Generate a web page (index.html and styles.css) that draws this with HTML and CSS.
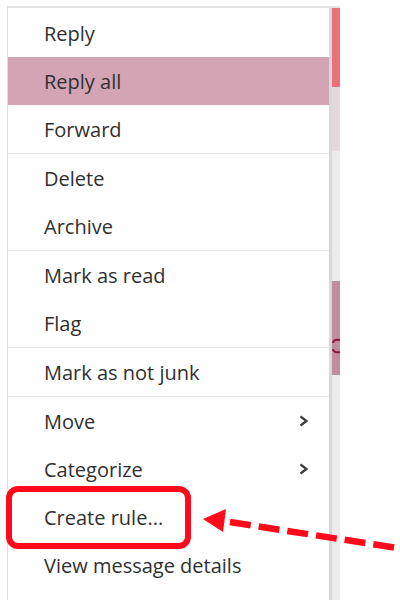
FILE: index.html
```html
<!DOCTYPE html>
<html>
<head>
<meta charset="utf-8">
<link rel="stylesheet" href="styles.css">
</head>
<body>
<div class="frame">
  <ul class="menu">
    <li class="item">Reply</li>
    <li class="item active">Reply all</li>
    <li class="item">Forward</li>
    <li class="sep"></li>
    <li class="item">Delete</li>
    <li class="item">Archive</li>
    <li class="sep"></li>
    <li class="item">Mark as read</li>
    <li class="item">Flag</li>
    <li class="sep"></li>
    <li class="item">Mark as not junk</li>
    <li class="sep"></li>
    <li class="item sub">Move<svg class="chev" width="10" height="12" viewBox="0 0 10 12"><polyline points="1.5,1.5 7.5,6 1.5,10.5" fill="none" stroke="#3c3c3c" stroke-width="2.2"/></svg></li>
    <li class="item sub">Categorize<svg class="chev" width="10" height="12" viewBox="0 0 10 12"><polyline points="1.5,1.5 7.5,6 1.5,10.5" fill="none" stroke="#3c3c3c" stroke-width="2.2"/></svg></li>
    <li class="item marked">Create rule...<span class="callout"></span></li>
    <li class="item">View message details</li>
  </ul>
  <div class="strip">
    <div class="seg seg-red"></div>
    <div class="seg seg-pale"></div>
    <div class="seg seg-gray"></div>
    <div class="seg seg-mauve"><svg class="frag" width="8" height="16" viewBox="0 0 8 16"><path d="M8,2 C3,1 1,3 1,5 M1,11 C1,13 3,15 8,14" fill="none" stroke="#8a1538" stroke-width="2"/></svg></div>
    <div class="seg seg-rest"></div>
  </div>
</div>
<svg class="arrow" width="210" height="60" viewBox="0 0 210 60">
  <polygon points="3,13 26,3 23,26" fill="#ff0a1a"/>
  <line x1="30" y1="16" x2="210" y2="44" stroke="#ff0a1a" stroke-width="6.5" stroke-dasharray="21 8"/>
</svg>
</body>
</html>
```
FILE: styles.css
```css
html, body {
  margin: 0;
  padding: 0;
  background: #ffffff;
}
body {
  position: relative;
  width: 400px;
  height: 600px;
  overflow: hidden;
  font-family: "Open Sans", "Noto Sans", sans-serif;
}
.frame {
  display: flex;
  margin: 6px 0 0 7px;
  width: 333px;
  border-top: 2px solid #e3e3e3;
  height: 592px;
}
.menu {
  list-style: none;
  margin: 0;
  padding: 1px 0 0 0;
  width: 322px;
  border-left: 1px solid #dedede;
  background: #fff;
}
.item {
  position: relative;
  display: flex;
  align-items: center;
  height: 48px;
  padding-left: 36px;
  font-size: 20px;
  color: #303030;
  white-space: nowrap;
}
.item.active {
  background: #d3a4b4;
}
.sub {
  justify-content: space-between;
  padding-right: 20px;
}
.chev {
  display: block;
}
.sep {
  height: 1px;
  background: #e6e6e6;
}
.callout {
  position: absolute;
  left: -2px;
  top: -7px;
  width: 185px;
  height: 63px;
  box-sizing: border-box;
  border: 6px solid #ff0a1a;
  border-radius: 12px;
}
.strip {
  display: flex;
  flex-direction: column;
  width: 8px;
  border-left: 3px solid #d9d9d9;
}
.seg-red { height: 79px; background: #e8717a; }
.seg-pale { height: 64px; background: #e3dadd; }
.seg-gray { height: 130px; background: #ececec; }
.seg-mauve {
  height: 94px;
  background: #c28c9e;
  display: flex;
  flex-direction: column;
  justify-content: flex-start;
}
.frag {
  display: block;
  margin-top: 57px;
}
.seg-rest { flex: 1; background: #ececec; }
.arrow {
  position: absolute;
  left: 200px;
  top: 506px;
}
```
